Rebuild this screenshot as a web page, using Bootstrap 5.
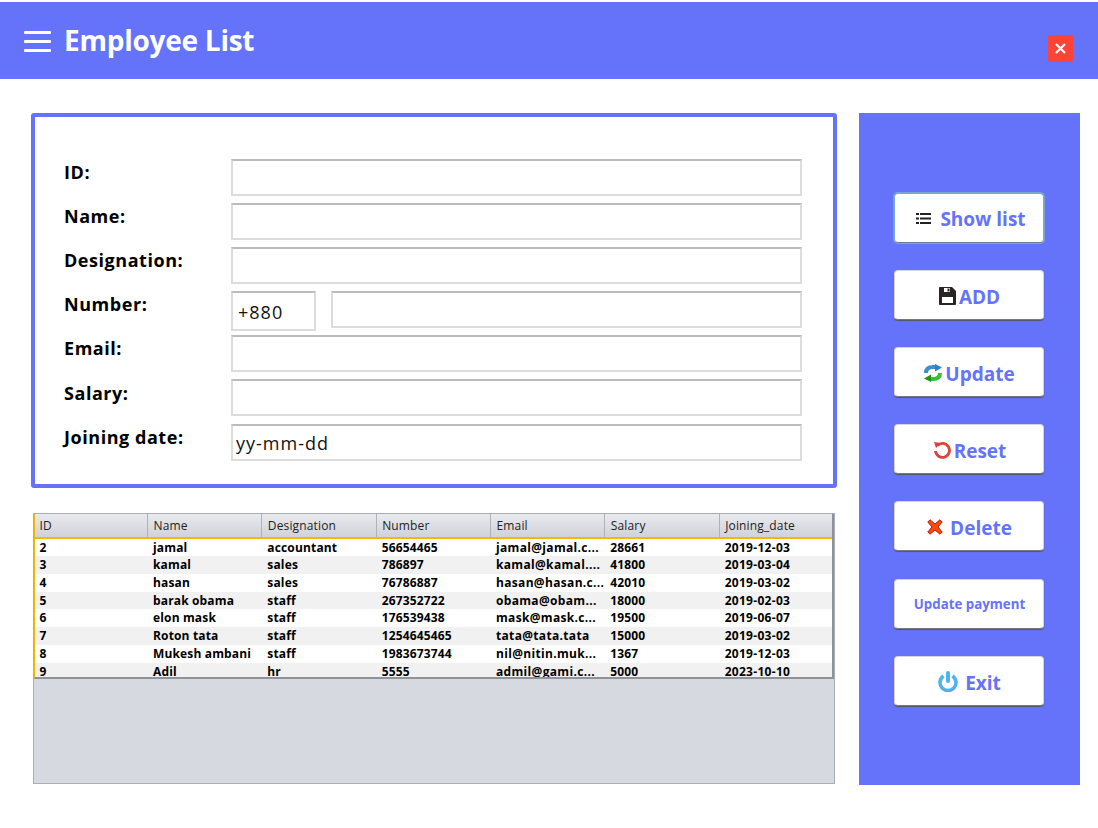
<!DOCTYPE html>
<html lang="en">

<head>
  <meta charset="UTF-8" />
  <meta name="viewport" content="width=device-width, initial-scale=1.0" />
  <title>Employee List</title>
  <link href="https://cdn.jsdelivr.net/npm/bootstrap@5.3.3/dist/css/bootstrap.min.css" rel="stylesheet">
  <style>
    body { padding-top: 2px; font-family: "Open Sans", "Noto Sans", sans-serif; background: #fff; color: #000; }
    .top-bar { height: 77px; background: #6573fb; padding-left: 24px; padding-right: 25px; }
    .menu-lines { width: 27px; height: 21px; margin-top: 29px; flex: none; }
    .app-title { font-size: 28px; font-weight: 700; line-height: 38px; letter-spacing: -.25px; color: #fff; margin: 19px 0 0 13px; }
    .close-box { width: 25px; height: 27px; margin-top: 33px; background: #fb4336; border-radius: 2px; }
    .main-area { padding: 34px 18px 0 31px; gap: 22px; }
    .left-col { width: 806px; }
    .form-panel { height: 375px; border: 4px solid #6573fb; border-radius: 3px; padding: 42px 31px 0 29px; }
    .form-line { height: 44px; }
    .form-line label { flex: none; width: 167px; font-size: 18px; font-weight: 700; line-height: 24px; padding-top: 1px; letter-spacing: .55px; }
    .form-line:nth-child(6) label { padding-top: 2px; }
    .form-line:last-child { margin-top: 1px; }
    .emp-input { height: 37px; border: 2px solid #dcdcdc; border-top-color: #bcbcbc; border-radius: 0; padding: 1px 3px 0; font-size: 18px; letter-spacing: 1px; color: #111; box-shadow: none; }
    .code-input { width: 85px; height: 40px; padding-left: 5px; margin-right: 15px; flex: none; }
    .grid-box { height: 271px; width: 802px; margin: 25px 0 0 2px; background: #d6d9e0; border: 1px solid #a9adb5; }
    .grid-clip { height: 165px; overflow: hidden; border-right: 2px solid #8f9299; border-bottom: 2px solid #8f9299; border-left: 1px solid #f5b800; }
    .grid-box .table { table-layout: fixed; width: 800px; margin: 0 0 0 -1px; --bs-table-bg: transparent; }
    .grid-box th { height: 24.4px; padding: 0 0 0 5.5px; font-size: 12px; font-weight: 400; line-height: 23px; letter-spacing: .15px; color: #222; background: linear-gradient(#e9eaee, #d0d2d9); border-bottom: 2px solid #f5b800; border-right: 1px solid #aeb1b8; }
    .grid-box th:first-child { width: 113.500px; }
    .grid-box td { height: 17.7px; padding: 0 0 0 5.5px; font-size: 12px; font-weight: 700; line-height: 17px; letter-spacing: .15px; color: #000; border: 0; white-space: nowrap; overflow: hidden; }
    .grid-box td:nth-child(5) { letter-spacing: .33px; }
    .grid-box td:nth-child(7) { letter-spacing: .3px; }
    .grid-box tbody tr:nth-child(odd) td { background: #fff; }
    .grid-box tbody tr:nth-child(even) td { background: #f1f1f1; }
    .side-panel { width: 221px; height: 672px; background: #6573fb; padding: 80px 0 0 35px; gap: 27px; }
    .side-btn { width: 150px; height: 50px; background: #fff; border: 1px solid #d4d4da; border-bottom-color: #77797f; border-radius: 4px; box-shadow: 0 1px 1px 0 #55575d; color: #6573fb; font-size: 19px; font-weight: 700; padding: 4px 0 0 1px; gap: 3px; }
    .side-btn svg { margin-top: -3px; }
    .side-btn:hover { background: #fff; color: #6573fb; }
    .side-btn.is-active { border-color: #79a5cf; border-bottom-color: #6b7f9c; box-shadow: 0 0 0 1px #79a5cf; gap: 9px; padding: 3px 0 0 4px; }
    .side-btn.small-label { font-size: 13.300px; padding-top: 1px; margin-top: 1px; }
  </style>
</head>

<body>

  <!-- Title bar -->
  <header class="top-bar d-flex align-items-start">
    <svg class="menu-lines" viewBox="0 0 27 21" fill="#fff">
      <rect y="0" width="27" height="3" rx="1" />
      <rect y="9" width="27" height="3" rx="1" />
      <rect y="18" width="27" height="3" rx="1" />
    </svg>
    <div class="app-title">Employee List</div>
    <button class="close-box btn ms-auto p-0 d-flex align-items-center justify-content-center" aria-label="Close">
      <svg width="11" height="11" viewBox="0 0 11 11" stroke="#fff" stroke-width="2.2">
        <path d="M1 1 10 10M10 1 1 10" />
      </svg>
    </button>
  </header>

  <div class="main-area d-flex align-items-start">
    <div class="left-col">

      <!-- Form -->
      <form class="form-panel">
        <div class="form-line d-flex align-items-start">
          <label>ID:</label>
          <input class="form-control emp-input" type="text">
        </div>
        <div class="form-line d-flex align-items-start">
          <label>Name:</label>
          <input class="form-control emp-input" type="text">
        </div>
        <div class="form-line d-flex align-items-start">
          <label>Designation:</label>
          <input class="form-control emp-input" type="text">
        </div>
        <div class="form-line d-flex align-items-start">
          <label>Number:</label>
          <input class="form-control emp-input code-input" type="text" value="+880">
          <input class="form-control emp-input" type="text">
        </div>
        <div class="form-line d-flex align-items-start">
          <label>Email:</label>
          <input class="form-control emp-input" type="text">
        </div>
        <div class="form-line d-flex align-items-start">
          <label>Salary:</label>
          <input class="form-control emp-input" type="text">
        </div>
        <div class="form-line d-flex align-items-start">
          <label>Joining date:</label>
          <input class="form-control emp-input" type="text" value="yy-mm-dd">
        </div>
      </form>

      <!-- Employee grid -->
      <div class="grid-box">
        <div class="grid-clip">
          <table class="table">
            <thead>
              <tr><th>ID</th><th>Name</th><th>Designation</th><th>Number</th><th>Email</th><th>Salary</th><th>Joining_date</th></tr>
            </thead>
            <tbody>
              <tr><td>2</td><td>jamal</td><td>accountant</td><td>56654465</td><td>jamal@jamal.c...</td><td>28661</td><td>2019-12-03</td></tr>
              <tr><td>3</td><td>kamal</td><td>sales</td><td>786897</td><td>kamal@kamal....</td><td>41800</td><td>2019-03-04</td></tr>
              <tr><td>4</td><td>hasan</td><td>sales</td><td>76786887</td><td>hasan@hasan.c...</td><td>42010</td><td>2019-03-02</td></tr>
              <tr><td>5</td><td>barak obama</td><td>staff</td><td>267352722</td><td>obama@obam...</td><td>18000</td><td>2019-02-03</td></tr>
              <tr><td>6</td><td>elon mask</td><td>staff</td><td>176539438</td><td>mask@mask.c...</td><td>19500</td><td>2019-06-07</td></tr>
              <tr><td>7</td><td>Roton tata</td><td>staff</td><td>1254645465</td><td>tata@tata.tata</td><td>15000</td><td>2019-03-02</td></tr>
              <tr><td>8</td><td>Mukesh ambani</td><td>staff</td><td>1983673744</td><td>nil@nitin.muk...</td><td>1367</td><td>2019-12-03</td></tr>
              <tr><td>9</td><td>Adil</td><td>hr</td><td>5555</td><td>admil@gami.c...</td><td>5000</td><td>2023-10-10</td></tr>
            </tbody>
          </table>
        </div>
      </div>
    </div>

    <!-- Actions -->
    <aside class="side-panel d-flex flex-column align-items-start">
      <button class="side-btn is-active btn d-flex align-items-center justify-content-center">
        <svg width="15" height="11" viewBox="0 0 15 11" fill="#222">
          <path d="M0 0h3v2H0zM4 0h11v2H4zM0 4.500h3v2H0zM4 4.500h11v2H4zM0 9h3v2H0zM4 9h11v2H4z" />
        </svg>
        Show list
      </button>
      <button class="side-btn btn d-flex align-items-center justify-content-center">
        <svg width="17" height="18" viewBox="0 0 17 18">
          <path fill="#2a2424" d="M0 1q0-1 1-1h12l4 4v13q0 1-1 1H1q-1 0-1-1z" />
          <path fill="#fff" d="M3 10h11v6H3zM5 1h6v4H5z" />
          <path fill="#2a2424" d="M8.500 1.500h2v3h-2z" />
        </svg>
        ADD
      </button>
      <button class="side-btn btn d-flex align-items-center justify-content-center">
        <svg width="18" height="18" viewBox="0 0 18 18" fill="none">
          <path stroke="#3f8fcc" stroke-width="4" d="M2 9Q2 3 9 3h3" />
          <path fill="#2f7fc0" d="M11 0l7 3.500-7 4z" />
          <path stroke="#35c035" stroke-width="4" d="M16 9Q16 15 9 15H6" />
          <path fill="#149a14" d="M7 18L0 14.500l7-4z" />
        </svg>
        Update
      </button>
      <button class="side-btn btn d-flex align-items-center justify-content-center">
        <svg width="18" height="18" viewBox="0 0 18 18" fill="none">
          <path stroke="#e0413f" stroke-width="2.800" d="M4.500 4.500A7 7 0 1 1 2.500 10" />
          <path fill="#e0413f" d="M1 1l7 1-5 5z" />
        </svg>
        Reset
      </button>
      <button class="side-btn btn d-flex align-items-center justify-content-center">
        <svg class="me-1" width="16" height="16" viewBox="0 0 16 16">
          <path fill="#fb4a10" stroke="#c01808" stroke-width="1" d="M3 .8 8 5l5-4.200L15.200 3 11 8l4.200 5-2.200 2.200L8 11l-5 4.200L.8 13 5 8 .8 3z" />
        </svg>
        Delete
      </button>
      <button class="side-btn small-label btn d-flex align-items-center justify-content-center">Update payment</button>
      <button class="side-btn btn d-flex align-items-center justify-content-center">
        <svg class="me-1" width="20" height="21" viewBox="0 0 20 21" fill="none">
          <path stroke="#4db4ee" stroke-width="3.600" d="M5.500 5A8 8 0 1 0 14.500 5" />
          <path stroke="#4db4ee" stroke-width="4" stroke-linecap="round" d="M10 2v8" />
        </svg>
        Exit
      </button>
    </aside>
  </div>

  <script src="https://cdn.jsdelivr.net/npm/bootstrap@5.3.3/dist/js/bootstrap.bundle.min.js"></script>
</body>

</html>
